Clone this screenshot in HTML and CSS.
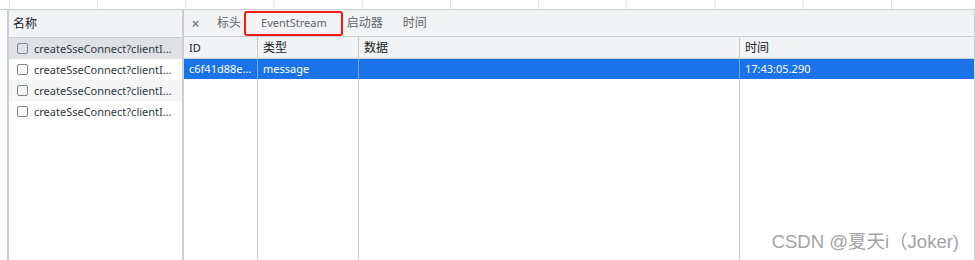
FILE: index.html
```html
<!DOCTYPE html>
<html lang="zh-CN">

<head>
    <meta charset="utf-8">
    <meta name="viewport" content="width=device-width, initial-scale=1.0">
    <title>EventStream</title>

    <link rel="stylesheet" href="styles.css">
</head>

<body>
    <div class="devtools">
        <div class="overview"></div>

        <div class="panes">
            <aside class="requests">
                <div class="requests-head cjk">名称</div>
                <ul class="request-list">
                    <li class="request selected"><span class="check"></span><span class="request-name">createSseConnect?clientI…</span></li>
                    <li class="request"><span class="check"></span><span class="request-name">createSseConnect?clientI…</span></li>
                    <li class="request striped"><span class="check"></span><span class="request-name">createSseConnect?clientI…</span></li>
                    <li class="request"><span class="check"></span><span class="request-name">createSseConnect?clientI…</span></li>
                </ul>
            </aside>

            <section class="detail">
                <nav class="tabs">
                    <button class="tab-close">×</button>
                    <span class="tab cjk">标头</span>
                    <span class="tab marked">EventStream</span>
                    <span class="tab cjk">启动器</span>
                    <span class="tab cjk">时间</span>
                </nav>

                <div class="events">
                    <div class="cell head">ID</div>
                    <div class="cell head cjk">类型</div>
                    <div class="cell head cjk">数据</div>
                    <div class="cell head cjk">时间</div>

                    <div class="cell row">c6f41d88e…</div>
                    <div class="cell row">message</div>
                    <div class="cell row"></div>
                    <div class="cell row">17:43:05.290</div>

                    <div class="cell fill"></div>
                    <div class="cell fill"></div>
                    <div class="cell fill"></div>
                    <div class="cell fill"></div>
                </div>
            </section>
        </div>

        <div class="watermark">CSDN @夏天i（Joker)</div>
    </div>
</body>

</html>
```

FILE: styles.css
```css
body {
    margin: 0;
    background-color: #fff;
    font-family: "Noto Sans", "Noto Sans CJK SC", sans-serif;
    font-size: 11px;
    color: #303942;
}

.cjk {
    font-size: 12px;
}

.devtools {
    position: relative;
    width: 975px;
    height: 260px;
    display: flex;
    flex-direction: column;
    overflow: hidden;
}

/* tidslinje-striber øverst */
.overview {
    height: 9px;
    border-bottom: 1px solid #cacdd1;
    background-image: linear-gradient(to right, #e0e0e0 1px, transparent 1px);
    background-size: 88.2px 100%;
    background-position: 9px 0;
}

.panes {
    flex: 1;
    display: flex;
    padding-left: 7px;
    min-height: 0;
}

.requests {
    width: 173px;
    flex: none;
    border-left: 2px solid #cbcfd3;
    border-right: 2px solid #cbcfd3;
}

.requests-head {
    height: 27px;
    line-height: 27px;
    padding-left: 4px;
    background-color: #f1f3f4;
    border-bottom: 1px solid #cacdd1;
    color: #202124;
}

.request-list {
    list-style: none;
    margin: 0;
    padding: 0;
}

.request {
    height: 21px;
    display: flex;
    align-items: center;
    gap: 6px;
    padding-left: 8px;
}

.request.selected {
    background-color: #dfe1e5;
}

.request.striped {
    background-color: #f5f5f5;
}

.check {
    flex: none;
    width: 9px;
    height: 9px;
    border: 1px solid #80868b;
    border-radius: 2px;
}

.request-name {
    white-space: nowrap;
    overflow: hidden;
    text-overflow: ellipsis;
}

.detail {
    flex: 1;
    min-width: 0;
    display: flex;
    flex-direction: column;
    border-right: 1px solid #d0d0d0;
}

.tabs {
    height: 26px;
    display: flex;
    align-items: center;
    background-color: #f1f3f4;
    border-bottom: 1px solid #cacdd1;
    color: #5f6368;
}

.tab-close {
    width: 23px;
    padding: 0;
    border: 0;
    background: none;
    font: 14px "Noto Sans", sans-serif;
    color: #5f6368;
}

.tab {
    padding: 0 10px;
    line-height: 26px;
}

.tab.marked {
    position: relative;
}

.tab.marked::after {
    content: "";
    position: absolute;
    left: -7px;
    right: -6px;
    top: 1px;
    bottom: 0;
    border: 2px solid #f01a16;
    border-radius: 3px;
}

.events {
    flex: 1;
    display: grid;
    grid-template-columns: 74px 101px 381px 1fr;
    grid-template-rows: 22px 20px 1fr;
}

.cell {
    padding: 0 2px 0 5px;
    border-right: 1px solid #cbcbcb;
    white-space: nowrap;
    overflow: hidden;
    text-overflow: ellipsis;
}

.cell:nth-child(4n) {
    border-right: 0;
}

.head {
    line-height: 21px;
    background-color: #f1f3f4;
    border-bottom: 1px solid #cacdd1;
    color: #202124;
}

.row {
    line-height: 20px;
    background-color: #1a73e8;
    color: #fff;
    border-right-color: #6fa4ef;
}

.watermark {
    position: absolute;
    right: 16px;
    bottom: 7px;
    font-family: "Liberation Sans", "Noto Sans CJK SC", sans-serif;
    font-size: 18.5px;
    color: #a3a3a3;
}
```
